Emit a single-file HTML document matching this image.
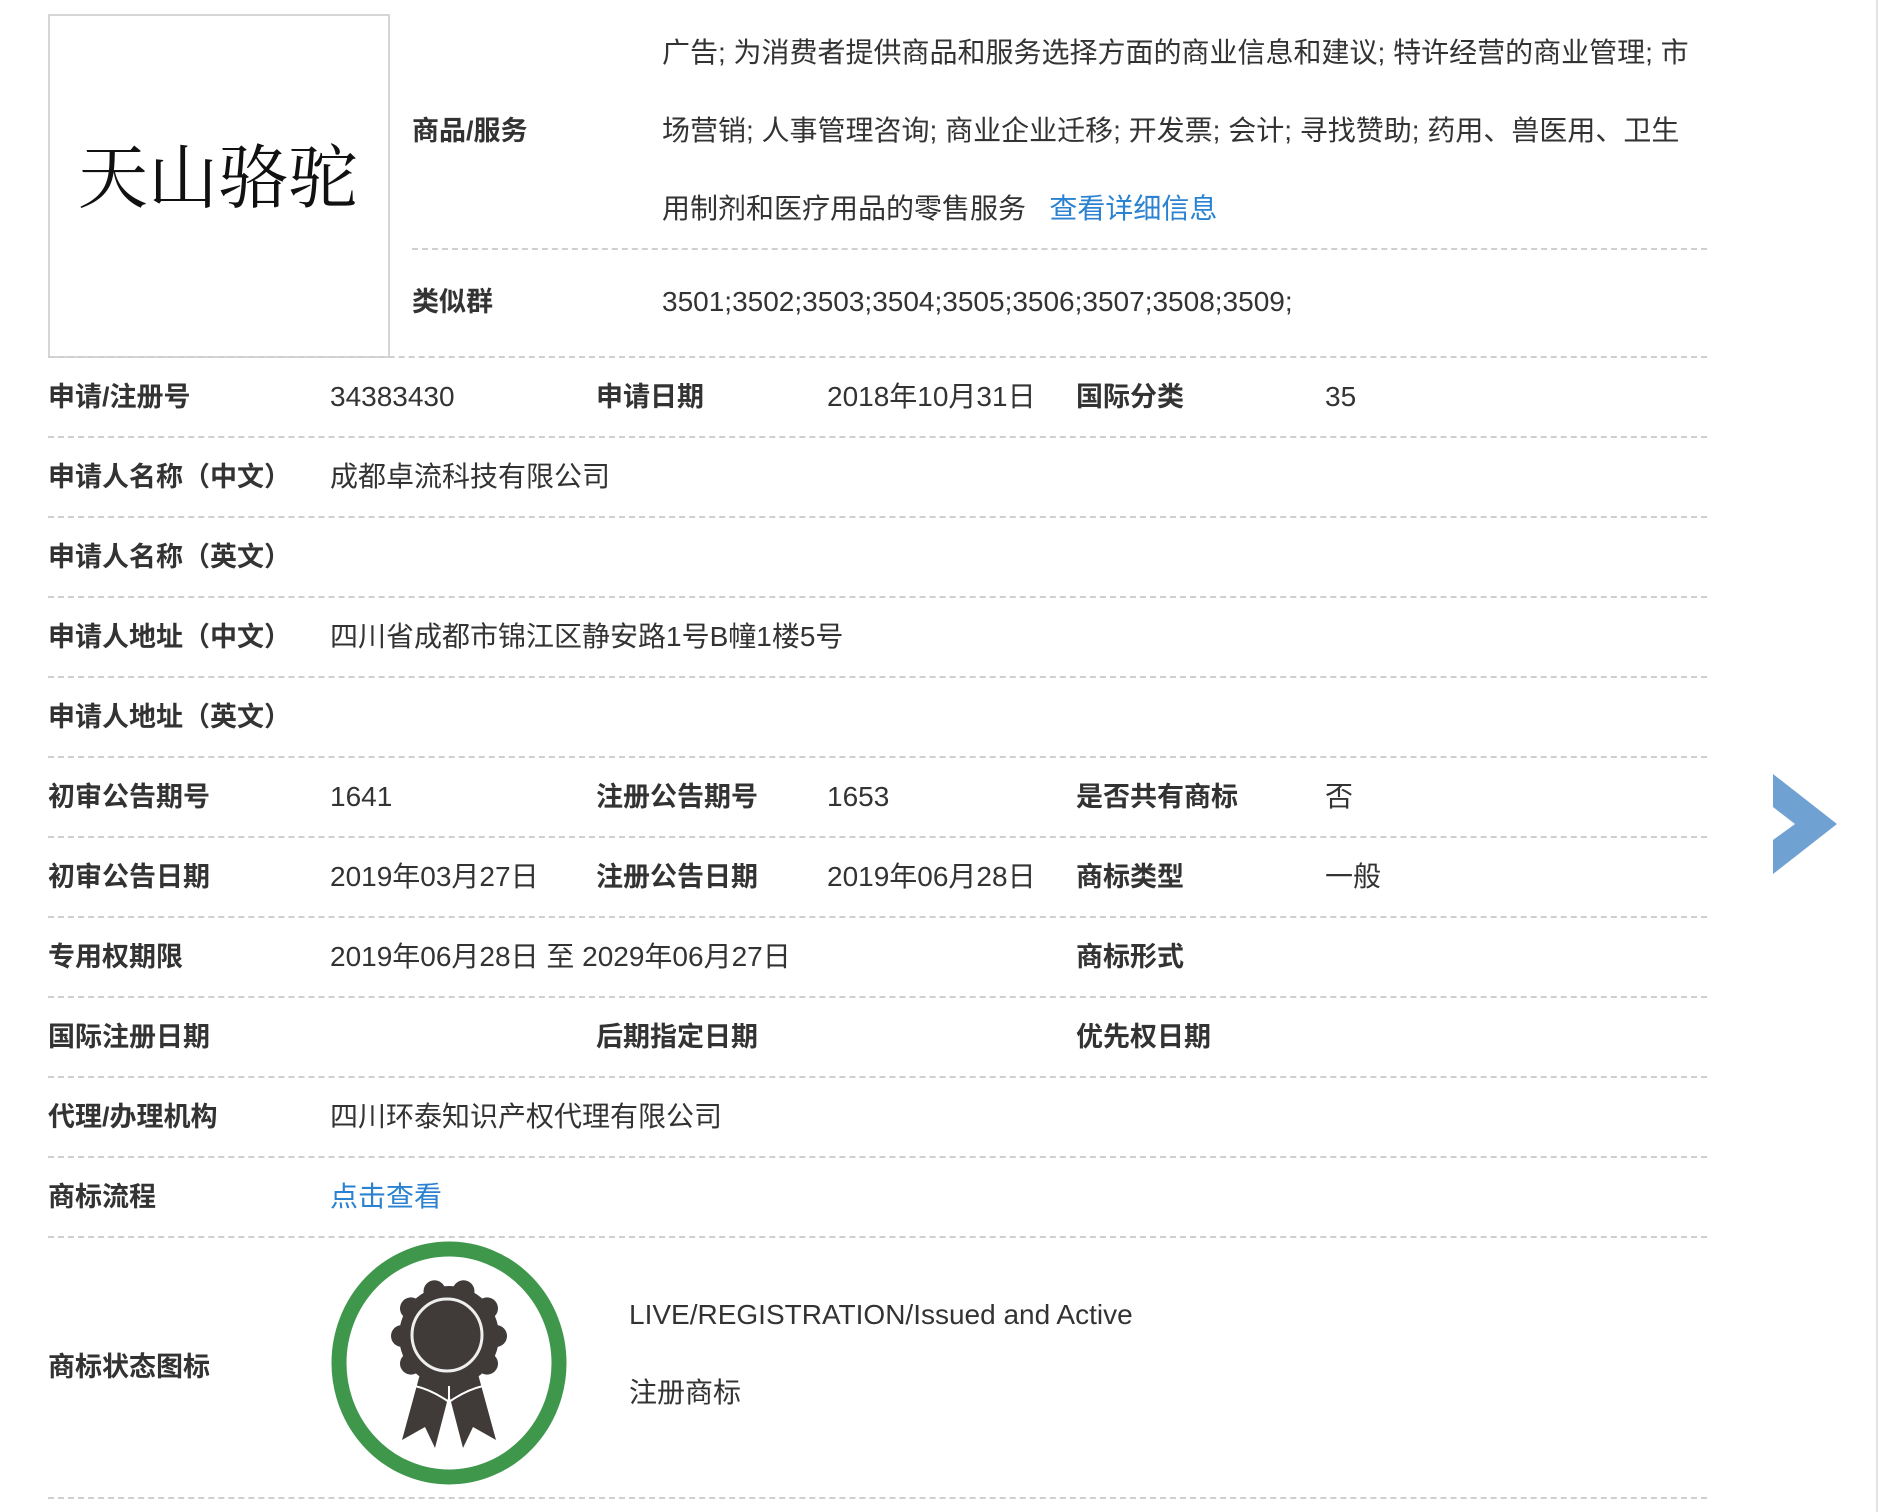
<!DOCTYPE html>
<html><head><meta charset="utf-8">
<style>
html,body{margin:0;padding:0;background:#fff;}
body{width:1878px;height:1512px;position:relative;overflow:hidden;font-family:"Liberation Sans","Noto Sans CJK SC",sans-serif;color:#333;font-size:28px;}
.a{position:absolute;white-space:nowrap;line-height:34px;}
.b{font-weight:bold;color:#333;font-size:27px;}
.l{position:absolute;left:48px;width:1659px;height:0;border-top:2px dashed #cfcfcf;}
.blue{color:#2a82d0;}
</style></head><body>
<div style="position:absolute;left:48px;top:14px;width:338px;height:340px;border:2px solid #d6d6d6;background:#fff;"></div>
<div class="a" style="left:78px;top:140px;font-family:'Liberation Serif','Noto Serif CJK SC',serif;font-size:70px;line-height:80px;color:#111;">天山骆驼</div>

<div class="a b" style="left:412px;top:114px;">商品/服务</div>
<div class="a" style="left:662px;top:36px;">广告; 为消费者提供商品和服务选择方面的商业信息和建议; 特许经营的商业管理; 市</div>
<div class="a" style="left:662px;top:114px;">场营销; 人事管理咨询; 商业企业迁移; 开发票; 会计; 寻找赞助; 药用、兽医用、卫生</div>
<div class="a" style="left:662px;top:192px;">用制剂和医疗用品的零售服务&nbsp;&nbsp;&nbsp;<span class="blue">查看详细信息</span></div>
<div class="l" style="left:412px;width:1295px;top:248px;"></div>
<div class="a b" style="left:412px;top:285px;">类似群</div>
<div class="a" style="left:662px;top:285px;">3501;3502;3503;3504;3505;3506;3507;3508;3509;</div>
<div class="l" style="top:356px;"></div>

<div class="a b" style="left:48px;top:380px;">申请/注册号</div>
<div class="a" style="left:330px;top:380px;">34383430</div>
<div class="a b" style="left:596px;top:380px;">申请日期</div>
<div class="a" style="left:827px;top:380px;">2018年10月31日</div>
<div class="a b" style="left:1076px;top:380px;">国际分类</div>
<div class="a" style="left:1325px;top:380px;">35</div>
<div class="l" style="top:436px;"></div>

<div class="a b" style="left:48px;top:460px;">申请人名称（中文）</div>
<div class="a" style="left:330px;top:460px;">成都卓流科技有限公司</div>
<div class="l" style="top:516px;"></div>

<div class="a b" style="left:48px;top:540px;">申请人名称（英文）</div>
<div class="l" style="top:596px;"></div>

<div class="a b" style="left:48px;top:620px;">申请人地址（中文）</div>
<div class="a" style="left:330px;top:620px;">四川省成都市锦江区静安路1号B幢1楼5号</div>
<div class="l" style="top:676px;"></div>

<div class="a b" style="left:48px;top:700px;">申请人地址（英文）</div>
<div class="l" style="top:756px;"></div>

<div class="a b" style="left:48px;top:780px;">初审公告期号</div>
<div class="a" style="left:330px;top:780px;">1641</div>
<div class="a b" style="left:596px;top:780px;">注册公告期号</div>
<div class="a" style="left:827px;top:780px;">1653</div>
<div class="a b" style="left:1076px;top:780px;">是否共有商标</div>
<div class="a" style="left:1325px;top:780px;">否</div>
<div class="l" style="top:836px;"></div>

<div class="a b" style="left:48px;top:860px;">初审公告日期</div>
<div class="a" style="left:330px;top:860px;">2019年03月27日</div>
<div class="a b" style="left:596px;top:860px;">注册公告日期</div>
<div class="a" style="left:827px;top:860px;">2019年06月28日</div>
<div class="a b" style="left:1076px;top:860px;">商标类型</div>
<div class="a" style="left:1325px;top:860px;">一般</div>
<div class="l" style="top:916px;"></div>

<div class="a b" style="left:48px;top:940px;">专用权期限</div>
<div class="a" style="left:330px;top:940px;">2019年06月28日 至 2029年06月27日</div>
<div class="a b" style="left:1076px;top:940px;">商标形式</div>
<div class="l" style="top:996px;"></div>

<div class="a b" style="left:48px;top:1020px;">国际注册日期</div>
<div class="a b" style="left:596px;top:1020px;">后期指定日期</div>
<div class="a b" style="left:1076px;top:1020px;">优先权日期</div>
<div class="l" style="top:1076px;"></div>

<div class="a b" style="left:48px;top:1100px;">代理/办理机构</div>
<div class="a" style="left:330px;top:1100px;">四川环泰知识产权代理有限公司</div>
<div class="l" style="top:1156px;"></div>

<div class="a b" style="left:48px;top:1180px;">商标流程</div>
<div class="a blue" style="left:330px;top:1180px;">点击查看</div>
<div class="l" style="top:1236px;"></div>

<div class="a b" style="left:48px;top:1350px;">商标状态图标</div>
<svg style="position:absolute;left:320px;top:1236px;" width="260" height="260" viewBox="0 0 260 260">
<ellipse cx="129" cy="127" rx="110" ry="114" fill="none" stroke="#3f974c" stroke-width="15"/>
<g fill="#403b39">
<path d="M100 138 L128 150 L128 162 L115 212 L105 191 L82 204 Z"/>
<path d="M158 138 L130 150 L130 162 L143 212 L153 191 L176 204 Z"/>
<circle cx="129" cy="100" r="50"/>
<circle cx="176" cy="100" r="11"/><circle cx="167" cy="127.6" r="11"/><circle cx="143.5" cy="144.7" r="11"/><circle cx="114.5" cy="144.7" r="11"/><circle cx="91" cy="127.6" r="11"/><circle cx="82" cy="100" r="11"/><circle cx="91" cy="72.4" r="11"/><circle cx="114.5" cy="55.3" r="11"/><circle cx="143.5" cy="55.3" r="11"/><circle cx="167" cy="72.4" r="11"/>
</g>
<path d="M95 150 Q112 154 129 166 Q146 154 163 150" fill="none" stroke="#fff" stroke-width="2"/>
<ellipse cx="127" cy="99" rx="35" ry="36" fill="none" stroke="#eee" stroke-width="3"/>
</svg>
<div class="a" style="left:629px;top:1298px;">LIVE/REGISTRATION/Issued and Active</div>
<div class="a" style="left:629px;top:1376px;">注册商标</div>
<div class="l" style="top:1497px;"></div>

<svg style="position:absolute;left:1770px;top:770px;" width="70" height="110" viewBox="1770 770 70 110">
<polygon points="1773,774 1837,824 1773,874 1773,840 1795,824 1773,807" fill="#6fa1d3"/>
</svg>
<div style="position:absolute;left:1876px;top:0;width:2px;height:1512px;background:#e4e4e4;"></div>
</body></html>
